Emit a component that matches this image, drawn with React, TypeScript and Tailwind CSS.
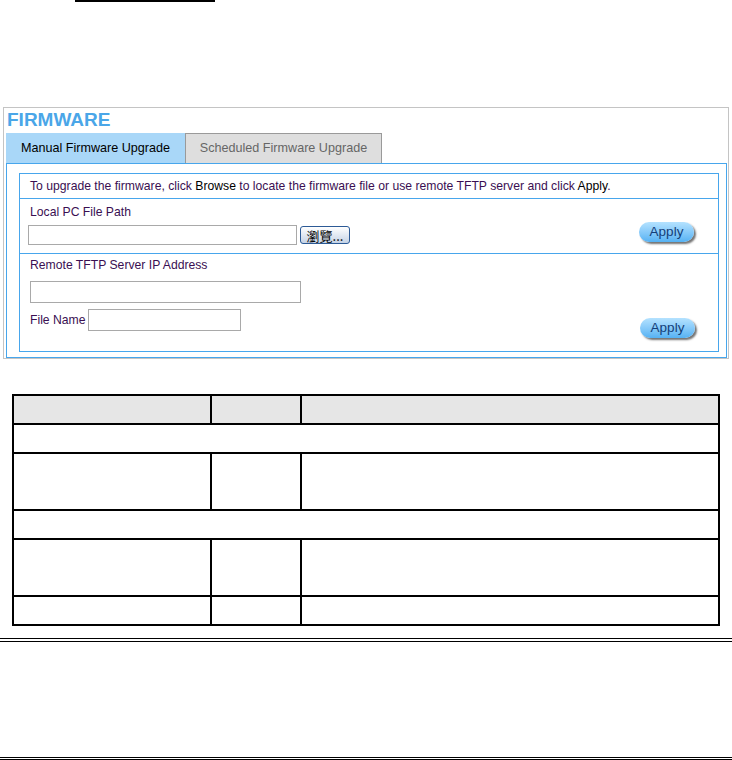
import React from 'react';

const ApplyButton: React.FC = () => (
    <button className="w-[55px] h-[20px] rounded-full bg-gradient-to-b from-[#b4e2ff] to-[#55b2f3] shadow-[2px_2px_2px_rgba(40,40,40,0.65)] text-[13.5px] leading-none text-[#143f78] font-['Liberation_Sans',sans-serif]">
        Apply
    </button>
);

export default function App() {
    return (
        <div className="w-[732px] h-[760px] bg-white flex flex-col font-['Liberation_Sans',Arial,sans-serif] text-[12.2px]">
            <div className="ml-[75px] w-[140px] h-[2px] bg-black" />

            {/* firmware page screenshot */}
            <div className="mt-[105px] ml-[3px] w-[726px] h-[252px] border border-[#c4c4c4] px-px flex flex-col">
                <div className="h-[25px] pl-[2px] pt-px text-[19px] leading-[22px] font-bold text-[#4aa6e8]">FIRMWARE</div>

                <div className="h-[30px] flex">
                    <div className="w-[179px] ml-px bg-[#a9d7f8] flex items-center justify-center text-[12.6px] text-black">
                        Manual Firmware Upgrade
                    </div>
                    <div className="w-[197px] bg-[#dedede] border border-b-0 border-[#9a9a9a] flex items-center justify-center text-[12.6px] text-[#666]">
                        Scheduled Firmware Upgrade
                    </div>
                </div>

                <div className="ml-px h-[195px] border border-[#47a6ec] pt-[9px] pl-[12px] pr-[7px]">
                    <div className="h-[179px] border border-[#47a6ec] flex flex-col text-[#3a0f52]">
                        <div className="h-[25px] border-b border-[#47a6ec] pl-[10px] flex items-center">
                            <span>
                                To upgrade the firmware, click <span className="text-black">Browse</span> to locate the firmware file or use remote TFTP server and click <span className="text-black">Apply</span>.
                            </span>
                        </div>

                        <div className="h-[55px] border-b border-[#47a6ec] flex justify-between">
                            <div className="pt-[6px]">
                                <div className="pl-[10px] leading-[14px]">Local PC File Path</div>
                                <div className="mt-[6px] pl-[8px] flex items-center">
                                    <div className="w-[269px] h-[20px] border border-[#a9a9a9]" />
                                    <button className="ml-[3px] w-[50px] h-[18px] rounded-[3px] border border-[#2c5a96] bg-gradient-to-b from-white to-[#c5d3e6] text-[13px] leading-none text-black font-['Noto_Sans_CJK_TC','Liberation_Sans',sans-serif]">
                                        瀏覽...
                                    </button>
                                </div>
                            </div>
                            <div className="self-end mb-[11px] mr-[24px]">
                                <ApplyButton />
                            </div>
                        </div>

                        <div className="flex-1 flex justify-between">
                            <div className="pt-[4px] pl-[10px]">
                                <div className="leading-[14px]">Remote TFTP Server IP Address</div>
                                <div className="mt-[9px] w-[271px] h-[22px] border border-[#a9a9a9]" />
                                <div className="mt-[6px] flex items-center">
                                    <span className="mr-[2px]">File Name</span>
                                    <div className="w-[153px] h-[22px] border border-[#a9a9a9]" />
                                </div>
                            </div>
                            <div className="self-end mb-[13px] mr-[23px]">
                                <ApplyButton />
                            </div>
                        </div>
                    </div>
                </div>
            </div>

            {/* parameter table */}
            <table className="mt-[35px] ml-[12px] w-[708px] border-collapse">
                <tbody>
                    <tr className="h-[29px] bg-[#e6e6e6]">
                        <td className="w-[198px] border-2 border-black" />
                        <td className="w-[90px] border-2 border-black" />
                        <td className="border-2 border-black" />
                    </tr>
                    <tr className="h-[29px]">
                        <td colSpan={3} className="border-2 border-black" />
                    </tr>
                    <tr className="h-[57px]">
                        <td className="border-2 border-black" />
                        <td className="border-2 border-black" />
                        <td className="border-2 border-black" />
                    </tr>
                    <tr className="h-[29px]">
                        <td colSpan={3} className="border-2 border-black" />
                    </tr>
                    <tr className="h-[57px]">
                        <td className="border-2 border-black" />
                        <td className="border-2 border-black" />
                        <td className="border-2 border-black" />
                    </tr>
                    <tr className="h-[29px]">
                        <td className="border-2 border-black" />
                        <td className="border-2 border-black" />
                        <td className="border-2 border-black" />
                    </tr>
                </tbody>
            </table>

            <div className="mt-[12px] h-[4px] border-y border-black" />
            <div className="mt-auto h-[3px] border-y border-black" />
        </div>
    );
}
